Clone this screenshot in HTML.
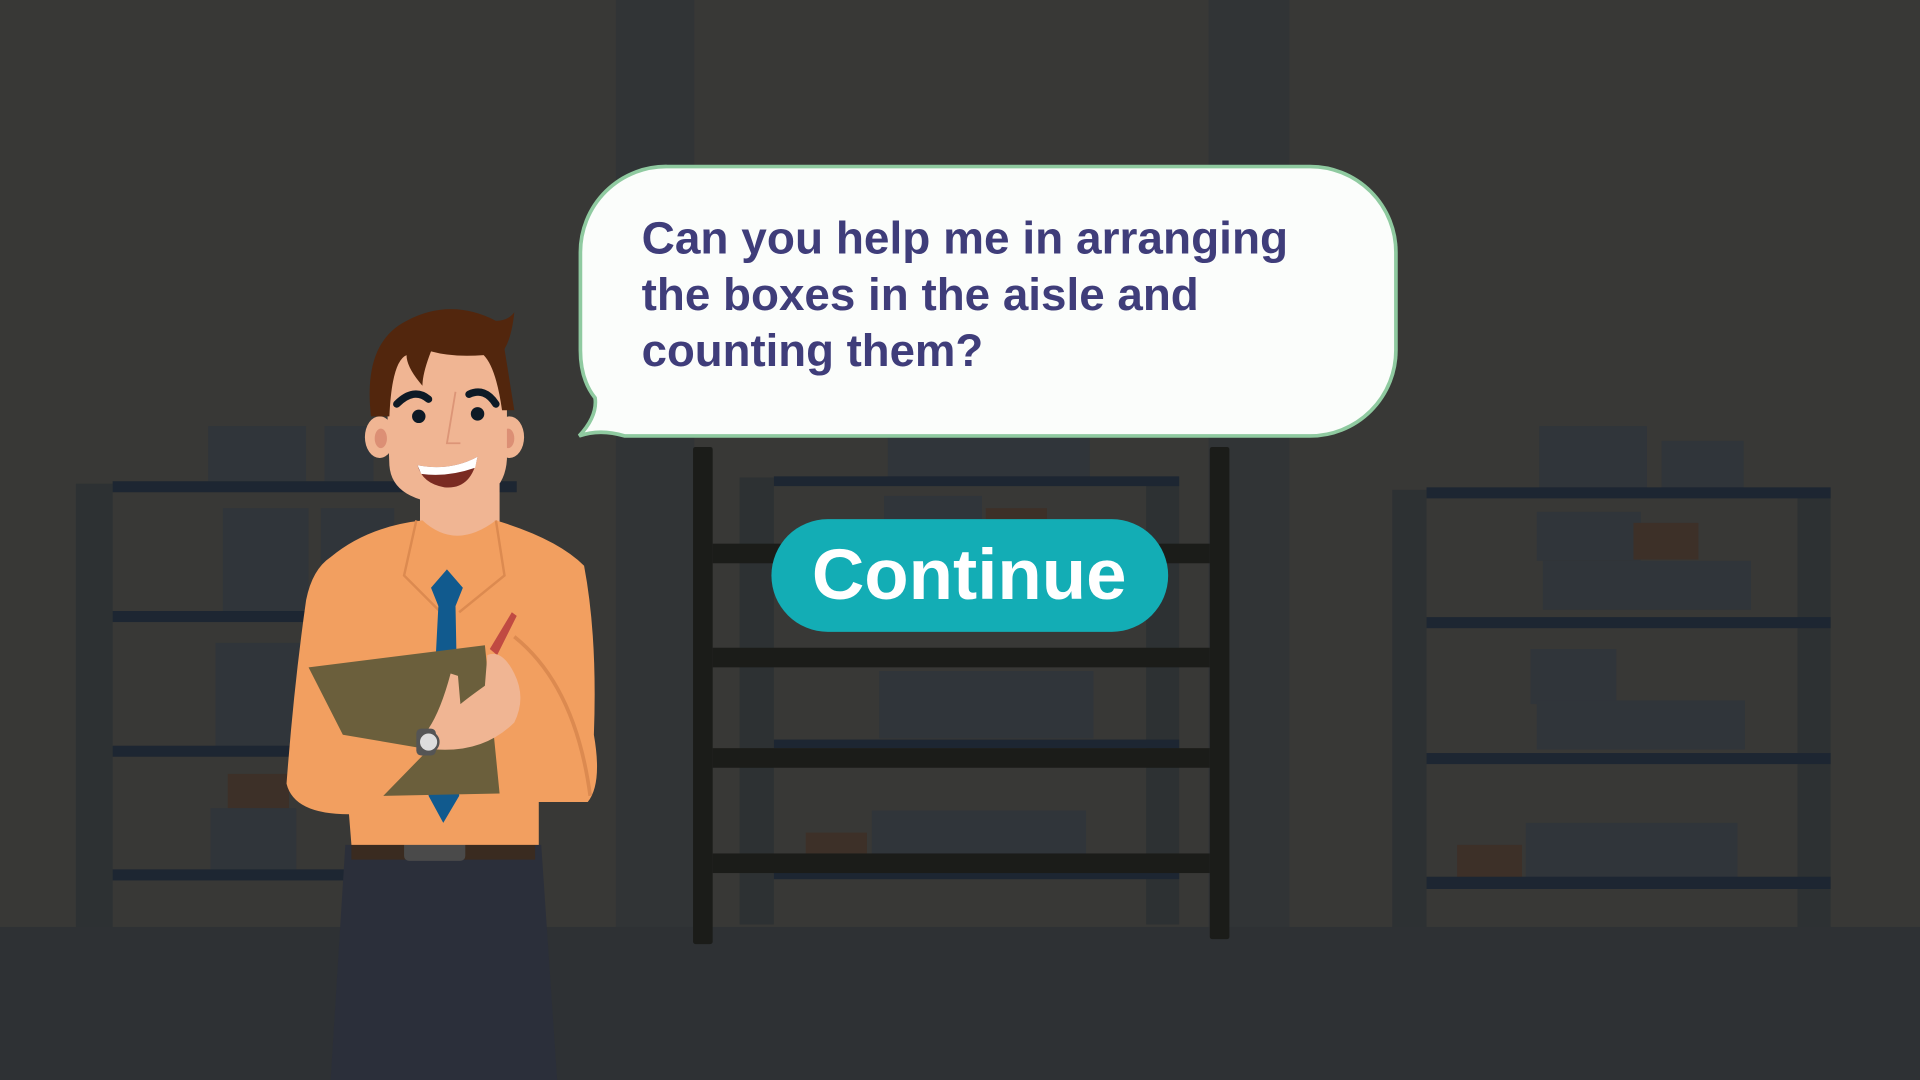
<!DOCTYPE html>
<html><head><meta charset="utf-8"><style>
html,body{margin:0;padding:0;background:#383836;overflow:hidden}
svg{display:block}
</style></head><body>
<svg width="1920" height="1080" viewBox="0 0 1568 882" preserveAspectRatio="none" xmlns="http://www.w3.org/2000/svg">
<rect width="1568" height="882" fill="#383836"/>
<rect x="503" y="0" width="64" height="760" fill="#313436"/>
<rect x="987" y="0" width="66" height="760" fill="#313436"/>
<rect x="0" y="757" width="1568" height="125" fill="#2e3134"/>
<g>
<rect x="62" y="395" width="30" height="362" fill="#2d3133"/>
<rect x="170" y="348" width="80" height="45" fill="#30353a"/><rect x="265" y="348" width="40" height="45" fill="#30353a"/>
<rect x="182" y="415" width="70" height="85" fill="#30353a"/><rect x="262" y="415" width="60" height="45" fill="#30353a"/>
<rect x="176" y="525" width="70" height="85" fill="#30353a"/>
<rect x="186" y="632" width="50" height="28" fill="#3d3028"/><rect x="172" y="660" width="70" height="50" fill="#30353a"/>
<rect x="92" y="393" width="330" height="9" fill="#1d2632"/>
<rect x="92" y="499" width="180" height="9" fill="#1d2632"/>
<rect x="92" y="609" width="160" height="9" fill="#1d2632"/>
<rect x="92" y="710" width="200" height="9" fill="#1d2632"/>
</g>
<g>
<rect x="604" y="390" width="28" height="365" fill="#2d3133"/><rect x="936" y="390" width="27" height="365" fill="#2d3133"/>
<rect x="725" y="355" width="165" height="35" fill="#30353a"/>
<rect x="722" y="405" width="80" height="40" fill="#30353a"/><rect x="805" y="415" width="50" height="30" fill="#3d3028"/>
<rect x="718" y="548" width="175" height="55" fill="#30353a"/>
<rect x="712" y="662" width="175" height="35" fill="#30353a"/><rect x="658" y="680" width="50" height="18" fill="#3d3028"/>
<rect x="632" y="389" width="331" height="8" fill="#1d2632"/>
<rect x="632" y="604" width="331" height="7" fill="#1d2632"/>
<rect x="632" y="711" width="331" height="7" fill="#1d2632"/>
</g>
<g>
<rect x="1137" y="400" width="28" height="357" fill="#2d3133"/><rect x="1468" y="400" width="27" height="357" fill="#2d3133"/>
<rect x="1257" y="348" width="88" height="52" fill="#30353a"/><rect x="1357" y="360" width="67" height="40" fill="#30353a"/>
<rect x="1255" y="418" width="85" height="40" fill="#30353a"/><rect x="1334" y="427" width="53" height="30" fill="#3d3028"/>
<rect x="1260" y="458" width="170" height="40" fill="#30353a"/>
<rect x="1250" y="530" width="70" height="45" fill="#30353a"/><rect x="1255" y="572" width="170" height="40" fill="#30353a"/>
<rect x="1246" y="672" width="173" height="45" fill="#30353a"/><rect x="1190" y="690" width="53" height="27" fill="#3d3028"/>
<rect x="1165" y="398" width="330" height="9" fill="#1d2632"/>
<rect x="1165" y="504" width="330" height="9" fill="#1d2632"/>
<rect x="1165" y="615" width="330" height="9" fill="#1d2632"/>
<rect x="1165" y="716" width="330" height="10" fill="#1d2632"/>
</g>
<g fill="#1b1c19">
<rect x="566" y="365" width="16" height="406" rx="2"/><rect x="988" y="365" width="16" height="402" rx="2"/>
<rect x="582" y="444" width="406" height="16"/>
<rect x="582" y="529" width="406" height="16"/>
<rect x="582" y="611" width="406" height="16"/>
<rect x="582" y="697" width="406" height="16"/>
</g>
<path d="M545 136 H1070 A70 70 0 0 1 1140 206 V286 A70 70 0 0 1 1070 356 H510 Q490 350 473 356 Q488 340 486 325 Q474 310 474 286 V206 A70 70 0 0 1 545 136 Z" fill="#fbfdfb" stroke="#8fcaa0" stroke-width="3"/>
<g font-family="Liberation Sans, sans-serif" font-weight="bold" font-size="37" fill="#3f3d7a">
<text x="524" y="207" textLength="528" lengthAdjust="spacingAndGlyphs">Can you help me in arranging</text>
<text x="524" y="253" textLength="455" lengthAdjust="spacingAndGlyphs">the boxes in the aisle and</text>
<text x="524" y="299" textLength="279" lengthAdjust="spacingAndGlyphs">counting them?</text>
</g>
<rect x="630" y="424" width="324" height="92" rx="46" fill="#13adb5"/>
<text x="663" y="489" textLength="257" lengthAdjust="spacingAndGlyphs" font-family="Liberation Sans, sans-serif" font-weight="bold" font-size="58" fill="#ffffff">Continue</text>
<g>
<path d="M282 690 H442 L455 882 H270 Z" fill="#2b2f3a"/>
<rect x="287" y="680" width="150" height="22" fill="#3a2b20"/>
<rect x="330" y="683" width="50" height="20" rx="4" fill="#4a4a4a"/>
<rect x="343" y="395" width="65" height="60" fill="#f0b593"/>
<path d="M270 455 Q300 430 345 425 Q372 450 405 425 Q455 440 477 462 Q488 520 485 600 Q492 640 480 655 L440 655 L440 690 H287 L285 665 Q240 665 234 640 Q240 560 250 490 Q255 465 270 455 Z" fill="#f29f60"/>
<path d="M420 520 Q470 560 482 650" stroke="#dc8a50" stroke-width="3" fill="none"/>
<path d="M340 425 L330 470 L360 500 M405 425 L412 470 L375 500" stroke="#dc8a50" stroke-width="2" fill="none"/>
<path d="M352 480 L365 465 L378 480 L372 495 L375 650 L362 672 L350 650 L358 495 Z" fill="#115a8e"/>
<path d="M252 545 L396 527 L408 648 L313 650 L350 612 L280 600 Z" fill="#6b5f3c"/>
<path d="M400 530 L418 500 L422 503 L406 535 Z" fill="#c04a42"/>
<path d="M368 550 Q360 580 350 595 L355 612 Q395 615 420 590 Q430 570 420 550 Q410 530 398 535 L396 560 Q382 570 376 575 L374 552 Z" fill="#f0b593"/>
<rect x="340" y="595" width="16" height="22" rx="4" fill="#555"/>
<circle cx="350" cy="606" r="8" fill="#dddddd" stroke="#555" stroke-width="2"/>
<ellipse cx="310" cy="357" rx="12" ry="17" fill="#f0b593"/>
<ellipse cx="416" cy="357" rx="12" ry="17" fill="#f0b593"/>
<ellipse cx="311" cy="358" rx="5" ry="8" fill="#dc8f75"/>
<ellipse cx="415" cy="358" rx="5" ry="8" fill="#dc8f75"/>
<path d="M315 300 Q318 275 365 272 Q412 275 414 300 L414 375 Q412 410 370 412 Q320 410 318 380 Z" fill="#f0b593"/>
<path d="M303 340 Q296 280 332 262 Q368 243 405 262 Q415 262 420 255 Q418 275 412 285 L420 335 L410 335 Q405 300 395 290 Q370 292 352 287 Q345 305 345 315 Q332 300 332 290 Q320 295 318 340 Z" fill="#52260d"/>
<path d="M324 330 Q338 316 350 326" stroke="#0d1a26" stroke-width="6" fill="none" stroke-linecap="round"/>
<path d="M383 322 Q396 316 405 330" stroke="#0d1a26" stroke-width="6" fill="none" stroke-linecap="round"/>
<circle cx="342" cy="340" r="5.5" fill="#0d1a26"/>
<circle cx="390" cy="338" r="5.5" fill="#0d1a26"/>
<path d="M372 320 L365 362 L376 362" stroke="#dc9577" stroke-width="1.5" fill="none"/>
<path d="M341 380 Q368 385 390 373 Q385 400 363 398 Q345 395 341 380 Z" fill="#7a2b22"/>
<path d="M341 380 Q368 385 390 373 L388 382 Q365 390 344 387 Z" fill="#ffffff"/>
</g>
</svg>
</body></html>
